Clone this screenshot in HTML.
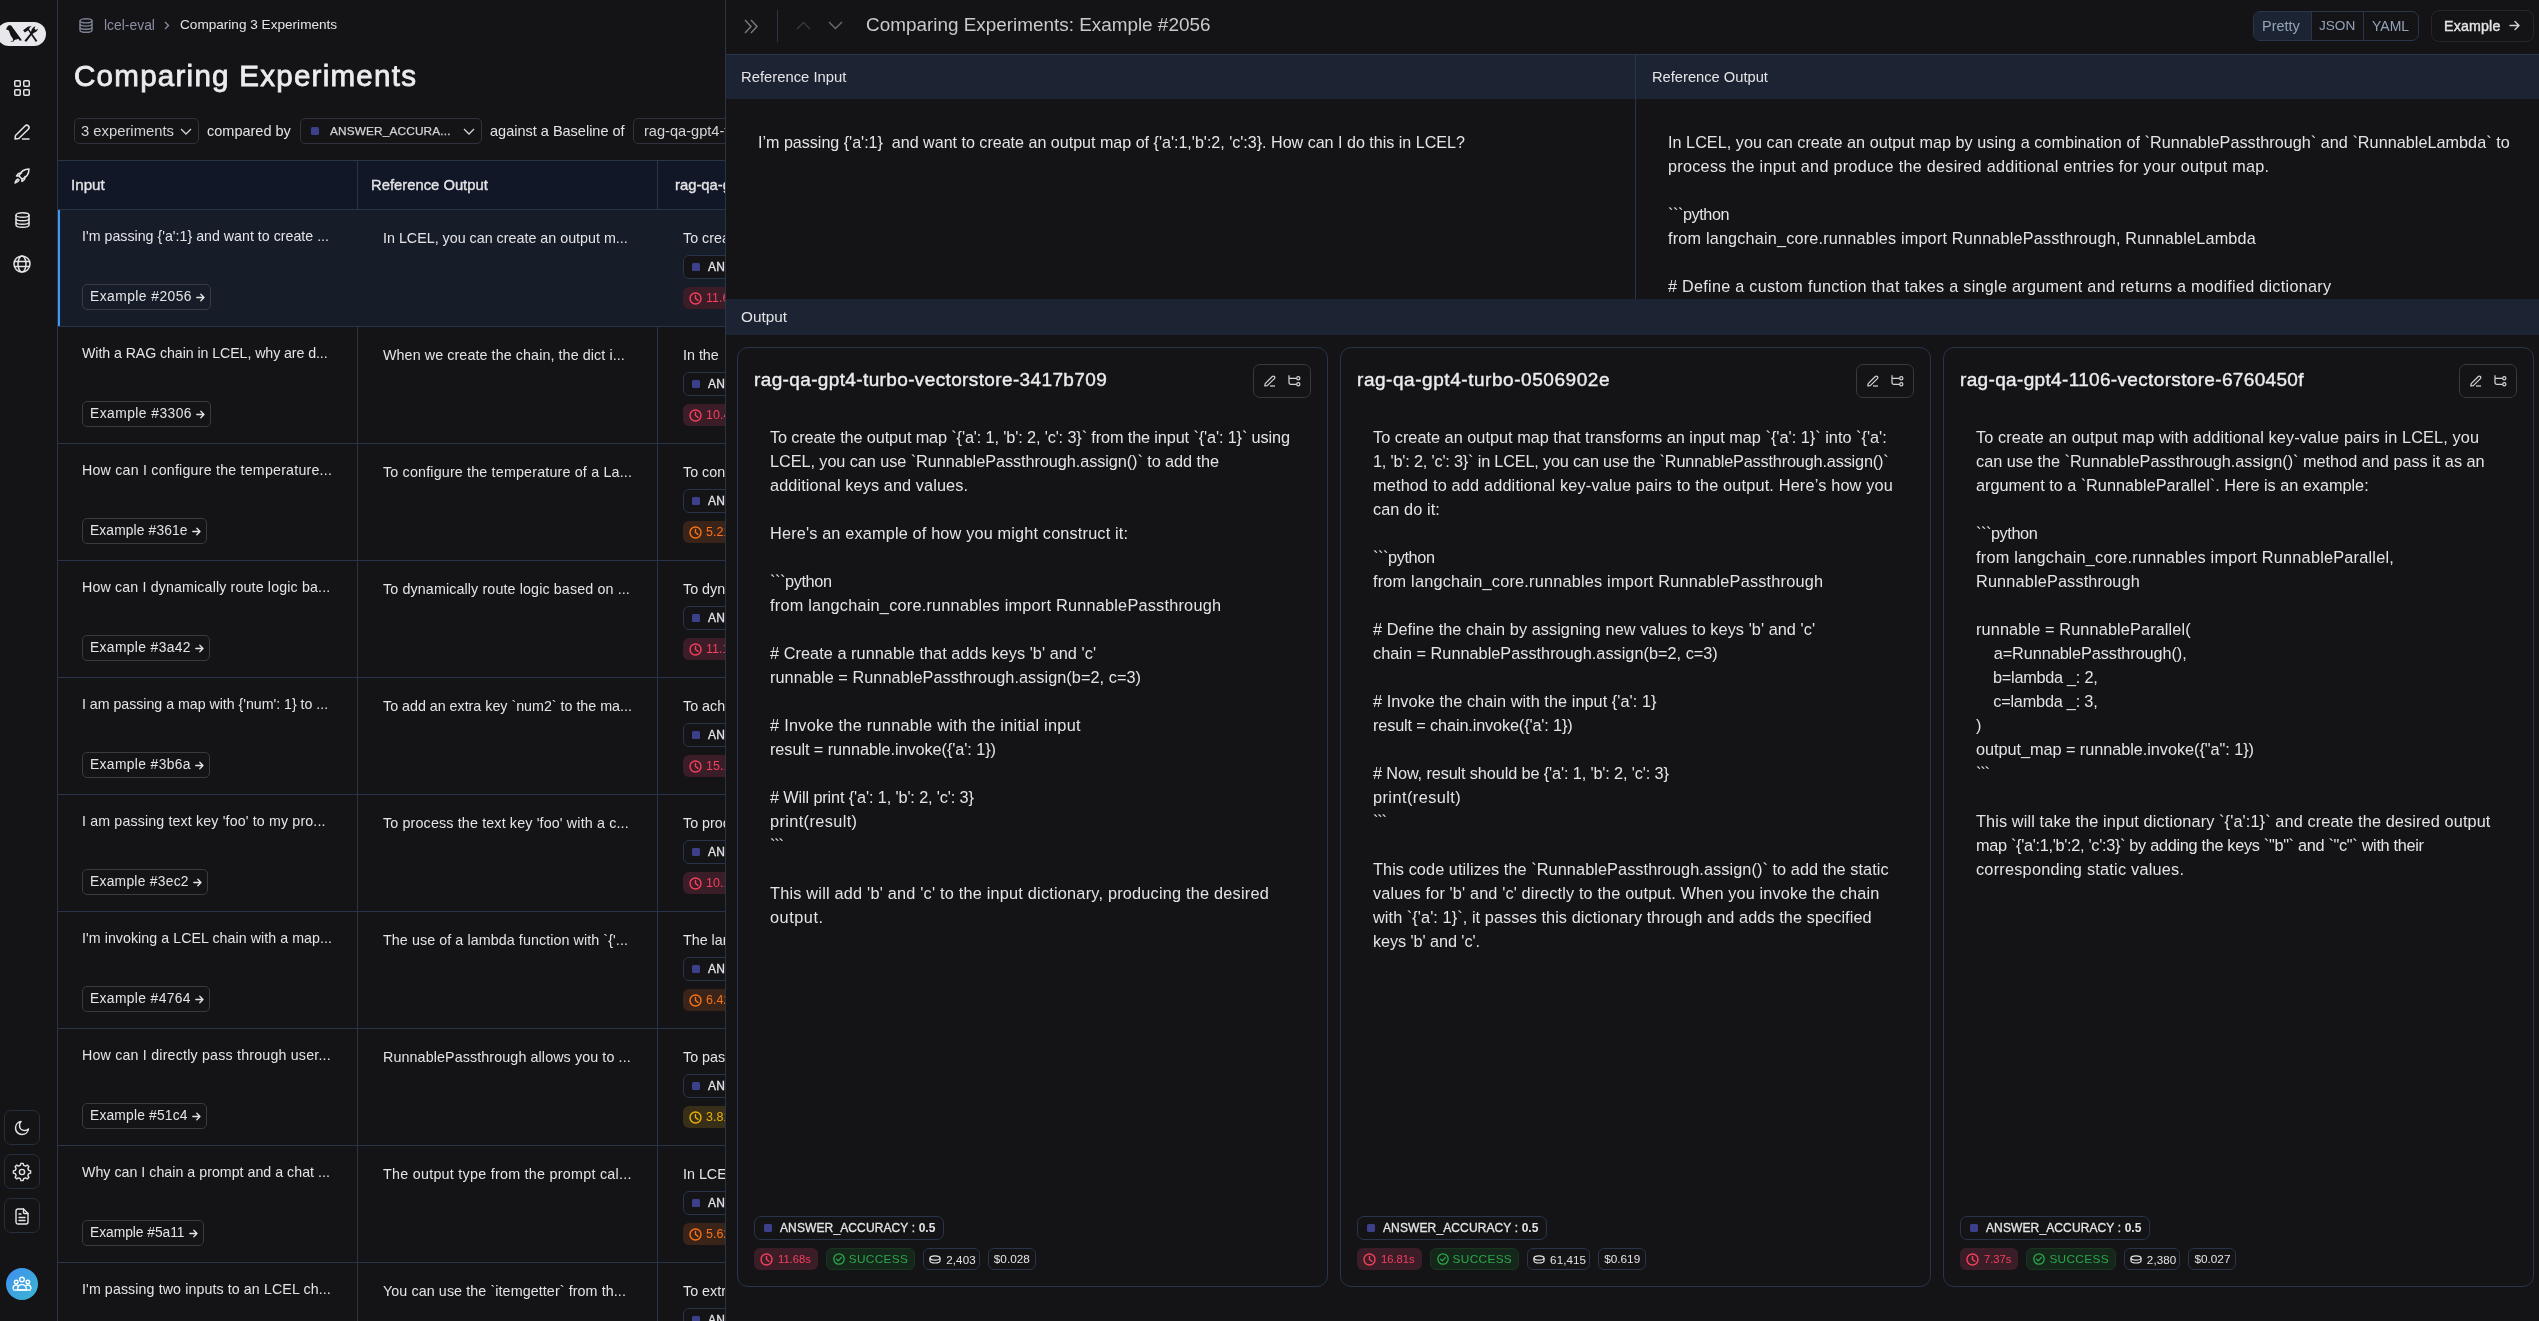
<!DOCTYPE html><html><head><meta charset='utf-8'><style>
*{box-sizing:border-box;margin:0;padding:0}
html{-webkit-font-smoothing:antialiased}
html,body{width:2539px;height:1321px;overflow:hidden;background:#141417;font-family:"Liberation Sans",sans-serif;color:#e4e4e7}
.a{position:absolute;will-change:transform}
.t{position:absolute;white-space:pre;line-height:20px;will-change:transform}
svg{position:absolute;overflow:visible}
</style></head><body><div class="a" style="left:57px;top:0px;width:1px;height:1321px;background:#283548"></div>
<div class="a" style="left:-3px;top:22px;width:49px;height:24px;border-radius:12px;background:#e8e8ec"></div>
<svg style="left:0;top:0" width="50" height="52" viewBox="0 0 50 52">
<path d="M6.2 29.7 C6.8 27 8 25.4 9.6 25.3 C10.6 25.2 11.4 25.8 11.9 26.5 L21.9 40.2 L19.8 40.8 L18.4 38.8 C17.5 39.3 16.6 39.5 15.7 39.4 L14.2 40.3 L13.9 41.3 L11.5 41.8 L10.1 41.6 L12.9 40.8 L13.1 38.9 C12 37.7 11.2 36.5 10.7 35.5 C10 33.8 9.4 31.8 9.0 30.7 C8.3 29.9 7.3 29.6 6.2 29.7 Z" fill="#141417"/>
<path d="M23.1 30.2 L28.2 26.4 L31.8 26.2 L29.6 27.8 L28.9 29.7 L24.9 32.5 Z" fill="#141417"/>
<path d="M27.9 29.9 L28.9 29.0 L37.3 40.7 L35.8 41.9 Z" fill="#141417"/>
<path d="M24.5 40.5 L30.6 33.2 L31.9 34.4 L26.1 41.9 Z" fill="#141417"/>
<path d="M30.6 33.2 C31.4 31 31.6 28.6 33.5 27.3 L35.4 26.2 L34.5 28.7 L35.9 30.1 L38 28.5 C37.6 30.6 36.3 32.1 34.1 32.7 L31.9 34.4 Z" fill="#141417"/>
</svg>
<svg style="left:14px;top:80px" width="16" height="16" viewBox="0 0 16 16" fill="none" stroke="#e4e4e7" stroke-width="1.5">
<rect x="0.75" y="0.75" width="5.5" height="5.5" rx="1"/><rect x="9.75" y="0.75" width="5.5" height="5.5" rx="1"/>
<rect x="0.75" y="9.75" width="5.5" height="5.5" rx="1"/><rect x="9.75" y="9.75" width="5.5" height="5.5" rx="1"/></svg>
<svg style="left:14px;top:124px" width="16" height="16" viewBox="0 0 16 16" fill="none" stroke="#e4e4e7" stroke-width="1.5" stroke-linecap="round" stroke-linejoin="round">
<path d="M1 15 L1.5 11.5 L11 2 C12 1 13.5 1 14.5 2 C15.3 3 15.2 4.3 14.3 5.2 L4.8 14.5 Z"/><path d="M8.5 15 L15 15"/></svg>
<svg style="left:14px;top:168px" width="16" height="16" viewBox="0 0 16 16" fill="none" stroke="#e4e4e7" stroke-width="1.5" stroke-linejoin="round" stroke-linecap="round">
<path d="M15 1 C10 1 6.5 4 5 8 L8 11 C12 9.5 15 6 15 1 Z"/><path d="M5 8 L2.5 8 L4.5 5.5 L7.5 5"/><path d="M8 11 L8 13.5 L10.5 11.5 L11 8.5"/><path d="M4 11 C2.5 11.5 1.5 13 1 15 C3 14.5 4.5 13.5 5 12"/></svg>
<svg style="left:15px;top:212px" width="15" height="16" viewBox="0 0 15 16" fill="none" stroke="#e4e4e7" stroke-width="1.5">
<ellipse cx="7.5" cy="3" rx="6.5" ry="2.3"/><path d="M1 3 V13 C1 14.3 4 15.3 7.5 15.3 C11 15.3 14 14.3 14 13 V3"/><path d="M1 6.5 C1 7.8 4 8.8 7.5 8.8 C11 8.8 14 7.8 14 6.5"/><path d="M1 10 C1 11.3 4 12.3 7.5 12.3 C11 12.3 14 11.3 14 10"/></svg>
<svg style="left:13px;top:255px" width="18" height="18" viewBox="0 0 18 18" fill="none" stroke="#e4e4e7" stroke-width="1.5">
<circle cx="9" cy="9" r="8"/><ellipse cx="9" cy="9" rx="4" ry="8"/><path d="M1.2 6.5 H16.8 M1.2 11.5 H16.8"/></svg>
<div class="a" style="left:4px;top:1110px;width:36px;height:35px;border:1px solid #242e3e;border-radius:7px"></div>
<div class="a" style="left:4px;top:1154px;width:36px;height:35px;border:1px solid #242e3e;border-radius:7px"></div>
<div class="a" style="left:4px;top:1198px;width:36px;height:35px;border:1px solid #242e3e;border-radius:7px"></div>
<svg style="left:14px;top:1120px" width="16" height="16" viewBox="0 0 16 16" fill="none" stroke="#e4e4e7" stroke-width="1.5" stroke-linejoin="round">
<path d="M7 1.5 C4 2 1.5 4.7 1.5 8 C1.5 11.6 4.4 14.5 8 14.5 C11.3 14.5 14 12 14.5 9 C13.5 10 12 10.5 10.5 10.5 C7.5 10.5 5.5 8.3 5.5 5.5 C5.5 4 6 2.5 7 1.5 Z"/></svg>
<svg style="left:12px;top:1162px" width="20" height="20" viewBox="0 0 20 20" fill="none" stroke="#e4e4e7" stroke-width="1.4" stroke-linejoin="round">
<path d="M16.70 8.36 L18.63 8.87 L18.63 11.13 L16.70 11.64 L15.90 13.58 L16.90 15.30 L15.30 16.90 L13.58 15.90 L11.64 16.70 L11.13 18.63 L8.87 18.63 L8.36 16.70 L6.42 15.90 L4.70 16.90 L3.10 15.30 L4.10 13.58 L3.30 11.64 L1.37 11.13 L1.37 8.87 L3.30 8.36 L4.10 6.42 L3.10 4.70 L4.70 3.10 L6.42 4.10 L8.36 3.30 L8.87 1.37 L11.13 1.37 L11.64 3.30 L13.58 4.10 L15.30 3.10 L16.90 4.70 L15.90 6.42 Z"/><circle cx="10" cy="10" r="2.6"/></svg>
<svg style="left:15px;top:1208px" width="14" height="17" viewBox="0 0 14 17" fill="none" stroke="#e4e4e7" stroke-width="1.4" stroke-linejoin="round" stroke-linecap="round">
<path d="M3 1 H8.5 L13 5.5 V14 C13 15.2 12.2 16 11 16 H3 C1.8 16 1 15.2 1 14 V3 C1 1.8 1.8 1 3 1 Z"/><path d="M8.5 1 V4.5 C8.5 5.1 8.9 5.5 9.5 5.5 H13"/><path d="M4 6 H6 M4 9.5 H10 M4 12.5 H10"/></svg>
<div class="a" style="left:6px;top:1268px;width:32px;height:32px;border-radius:50%;background:linear-gradient(135deg,#3f8ef0,#3ab8d2)"></div>
<svg style="left:12px;top:1276px" width="20" height="16" viewBox="0 0 20 16" fill="none" stroke="#ffffff" stroke-width="1.4">
<circle cx="10" cy="3.5" r="2.3"/><circle cx="4.2" cy="6" r="1.8"/><circle cx="15.8" cy="6" r="1.8"/>
<path d="M5.5 14 C5.5 10.5 7.5 8.5 10 8.5 C12.5 8.5 14.5 10.5 14.5 14 Z"/><path d="M1 13 C1 10.5 2.3 9 4.2 9 C5 9 5.7 9.3 6.2 9.7"/><path d="M19 13 C19 10.5 17.7 9 15.8 9 C15 9 14.3 9.3 13.8 9.7"/><path d="M1 14 H19"/></svg>
<svg style="left:79px;top:18px" width="14" height="15" viewBox="0 0 14 15" fill="none" stroke="#7c8294" stroke-width="1.4">
<ellipse cx="7" cy="2.8" rx="6" ry="2.1"/><path d="M1 2.8 V12.2 C1 13.4 3.7 14.3 7 14.3 C10.3 14.3 13 13.4 13 12.2 V2.8"/><path d="M1 6 C1 7.2 3.7 8.1 7 8.1 C10.3 8.1 13 7.2 13 6"/><path d="M1 9.2 C1 10.4 3.7 11.3 7 11.3 C10.3 11.3 13 10.4 13 9.2"/></svg>
<div class="t" style="left:104px;top:5.45px;font-size:13.9px;line-height:40px;color:#8b8fa3">lcel-eval</div>
<svg style="left:164px;top:21px" width="6" height="9" viewBox="0 0 6 9" fill="none" stroke="#8b8fa3" stroke-width="1.3"><path d="M1 1 L4.5 4.5 L1 8"/></svg>
<div class="t" style="left:180px;top:5.44px;font-size:13.6px;line-height:40px;color:#e4e4e7">Comparing 3 Experiments</div>
<div class="t" style="left:74px;top:56.03px;font-size:29.6px;line-height:40px;color:#ececee;-webkit-text-stroke:0.8px #ececee;letter-spacing:1.227px">Comparing Experiments</div>
<div class="a" style="left:74px;top:118px;width:125px;height:26px;border:1px solid #2e323c;border-radius:5px"></div>
<div class="t" style="left:81px;top:111.27px;font-size:14.8px;line-height:40px;color:#d4d4d8">3 experiments</div>
<svg style="left:180px;top:128px" width="12" height="7" viewBox="0 0 12 7" fill="none" stroke="#d4d4d8" stroke-width="1.3"><path d="M1 1 L6 6 L11 1"/></svg>
<div class="t" style="left:207px;top:111.26px;font-size:14.5px;line-height:40px;color:#e4e4e7">compared by</div>
<div class="a" style="left:300px;top:118px;width:182px;height:26px;border:1px solid #2e323c;border-radius:5px"></div>
<div class="a" style="left:311px;top:127px;width:8px;height:8px;background:#3c3f8a;border-radius:1.5px"></div>
<div class="t" style="left:330px;top:111.21px;font-size:11.8px;line-height:40px;color:#d4d4d8;-webkit-text-stroke:0.25px #d4d4d8;letter-spacing:0.167px">ANSWER_ACCURA...</div>
<svg style="left:463px;top:128px" width="12" height="7" viewBox="0 0 12 7" fill="none" stroke="#d4d4d8" stroke-width="1.3"><path d="M1 1 L6 6 L11 1"/></svg>
<div class="t" style="left:490px;top:111.26px;font-size:14.5px;line-height:40px;color:#e4e4e7">against a Baseline of</div>
<div class="a" style="left:633px;top:118px;width:140px;height:26px;border:1px solid #2e323c;border-radius:5px"></div>
<div class="t" style="left:644px;top:111.26px;font-size:14.6px;line-height:40px;color:#d4d4d8">rag-qa-gpt4-turbo-vectorstore</div>
<div class="a" style="left:58px;top:160px;width:667px;height:50px;background:#111726;border-top:1px solid #283548;border-bottom:1px solid #283548"></div>
<div class="t" style="left:71px;top:165.07px;font-size:15.2px;line-height:40px;color:#e4e4e7;-webkit-text-stroke:0.35px #e4e4e7">Input</div>
<div class="t" style="left:371px;top:165.07px;font-size:14.8px;line-height:40px;color:#e4e4e7;-webkit-text-stroke:0.35px #e4e4e7">Reference Output</div>
<div class="t" style="left:675px;top:165.07px;font-size:14.8px;line-height:40px;color:#e4e4e7;-webkit-text-stroke:0.35px #e4e4e7">rag-qa-gpt4-turbo</div>
<div class="a" style="left:357px;top:160px;width:1px;height:1161px;background:#283548"></div>
<div class="a" style="left:657px;top:160px;width:1px;height:1161px;background:#283548"></div>
<div class="a" style="left:58px;top:210px;width:667px;height:116px;background:#171c29"></div>
<div class="a" style="left:58px;top:210px;width:2px;height:116px;background:#3f97f6"></div>
<div class="a" style="left:58px;top:326px;width:667px;height:1px;background:#283548"></div>
<div class="t" style="left:82px;top:215.96px;font-size:14.2px;line-height:40px;color:#e4e4e7;letter-spacing:0.017px">I'm passing {'a':1} and want to create ...</div>
<div class="t" style="left:383px;top:217.76px;font-size:14.3px;line-height:40px;color:#e4e4e7;letter-spacing:-0.002px">In LCEL, you can create an output m...</div>
<div class="t" style="left:683px;top:217.86px;font-size:14.3px;line-height:40px;color:#e4e4e7">To create</div>
<div class="a" style="left:82px;top:284px;width:129px;height:26px;border:1px solid #3a3a42;border-radius:5px"></div>
<div class="t" style="left:89.5px;top:277.25px;font-size:13.8px;line-height:40px;color:#e4e4e7;letter-spacing:0.467px">Example #2056</div>
<svg style="left:196px;top:293px" width="9" height="9" viewBox="0 0 9 9" fill="none" stroke="#e4e4e7" stroke-width="1.3" stroke-linecap="round" stroke-linejoin="round"><path d="M0.8 4.5 H8 M4.8 1.2 L8 4.5 L4.8 7.8"/></svg>
<div class="a" style="left:683px;top:255px;width:120px;height:24px;border:1px solid #27344a;border-radius:6px;background:#141417"></div>
<div class="a" style="left:692px;top:263px;width:8px;height:8px;background:#3c3f8a;border-radius:1.5px"></div>
<div class="t" style="left:708px;top:247.22px;font-size:12px;line-height:40px;color:#e4e4e7;-webkit-text-stroke:0.3px #e4e4e7;letter-spacing:0.25px">ANSWER</div>
<div class="a" style="left:683px;top:287px;width:80px;height:22px;background:#3a1d26;border-radius:6px"></div>
<svg style="left:688.5px;top:291.5px" width="13.0" height="13.0" viewBox="0 0 13.0 13.0" fill="none" stroke="#f43f5e" stroke-width="1.4" stroke-linecap="round"><circle cx="6.5" cy="6.5" r="5.5"/><path d="M6.5 3.4749999999999996 V6.5 L8.975 8.425"/></svg>
<div class="t" style="left:706px;top:278.23px;font-size:12.5px;line-height:40px;color:#f43f5e">11.68s</div>
<div class="a" style="left:58px;top:443px;width:667px;height:1px;background:#283548"></div>
<div class="t" style="left:82px;top:332.96px;font-size:14.2px;line-height:40px;color:#e4e4e7;letter-spacing:-0.073px">With a RAG chain in LCEL, why are d...</div>
<div class="t" style="left:383px;top:334.76px;font-size:14.3px;line-height:40px;color:#e4e4e7;letter-spacing:0.089px">When we create the chain, the dict i...</div>
<div class="t" style="left:683px;top:334.86px;font-size:14.3px;line-height:40px;color:#e4e4e7">In the</div>
<div class="a" style="left:82px;top:401px;width:129px;height:26px;border:1px solid #3a3a42;border-radius:5px"></div>
<div class="t" style="left:89.5px;top:394.25px;font-size:13.8px;line-height:40px;color:#e4e4e7;letter-spacing:0.467px">Example #3306</div>
<svg style="left:196px;top:410px" width="9" height="9" viewBox="0 0 9 9" fill="none" stroke="#e4e4e7" stroke-width="1.3" stroke-linecap="round" stroke-linejoin="round"><path d="M0.8 4.5 H8 M4.8 1.2 L8 4.5 L4.8 7.8"/></svg>
<div class="a" style="left:683px;top:372px;width:120px;height:24px;border:1px solid #27344a;border-radius:6px;background:#141417"></div>
<div class="a" style="left:692px;top:380px;width:8px;height:8px;background:#3c3f8a;border-radius:1.5px"></div>
<div class="t" style="left:708px;top:364.22px;font-size:12px;line-height:40px;color:#e4e4e7;-webkit-text-stroke:0.3px #e4e4e7;letter-spacing:0.25px">ANSWER</div>
<div class="a" style="left:683px;top:404px;width:80px;height:22px;background:#3a1d26;border-radius:6px"></div>
<svg style="left:688.5px;top:408.5px" width="13.0" height="13.0" viewBox="0 0 13.0 13.0" fill="none" stroke="#f43f5e" stroke-width="1.4" stroke-linecap="round"><circle cx="6.5" cy="6.5" r="5.5"/><path d="M6.5 3.4749999999999996 V6.5 L8.975 8.425"/></svg>
<div class="t" style="left:706px;top:395.23px;font-size:12.5px;line-height:40px;color:#f43f5e">10.42s</div>
<div class="a" style="left:58px;top:560px;width:667px;height:1px;background:#283548"></div>
<div class="t" style="left:82px;top:449.96px;font-size:14.2px;line-height:40px;color:#e4e4e7;letter-spacing:0.232px">How can I configure the temperature...</div>
<div class="t" style="left:383px;top:451.76px;font-size:14.3px;line-height:40px;color:#e4e4e7;letter-spacing:0.171px">To configure the temperature of a La...</div>
<div class="t" style="left:683px;top:451.86px;font-size:14.3px;line-height:40px;color:#e4e4e7">To config</div>
<div class="a" style="left:82px;top:518px;width:125px;height:26px;border:1px solid #3a3a42;border-radius:5px"></div>
<div class="t" style="left:89.5px;top:511.25px;font-size:13.8px;line-height:40px;color:#e4e4e7;letter-spacing:0.134px">Example #361e</div>
<svg style="left:192px;top:527px" width="9" height="9" viewBox="0 0 9 9" fill="none" stroke="#e4e4e7" stroke-width="1.3" stroke-linecap="round" stroke-linejoin="round"><path d="M0.8 4.5 H8 M4.8 1.2 L8 4.5 L4.8 7.8"/></svg>
<div class="a" style="left:683px;top:489px;width:120px;height:24px;border:1px solid #27344a;border-radius:6px;background:#141417"></div>
<div class="a" style="left:692px;top:497px;width:8px;height:8px;background:#3c3f8a;border-radius:1.5px"></div>
<div class="t" style="left:708px;top:481.22px;font-size:12px;line-height:40px;color:#e4e4e7;-webkit-text-stroke:0.3px #e4e4e7;letter-spacing:0.25px">ANSWER</div>
<div class="a" style="left:683px;top:521px;width:80px;height:22px;background:#3a2419;border-radius:6px"></div>
<svg style="left:688.5px;top:525.5px" width="13.0" height="13.0" viewBox="0 0 13.0 13.0" fill="none" stroke="#f97316" stroke-width="1.4" stroke-linecap="round"><circle cx="6.5" cy="6.5" r="5.5"/><path d="M6.5 3.4749999999999996 V6.5 L8.975 8.425"/></svg>
<div class="t" style="left:706px;top:512.23px;font-size:12.5px;line-height:40px;color:#f97316">5.21s</div>
<div class="a" style="left:58px;top:677px;width:667px;height:1px;background:#283548"></div>
<div class="t" style="left:82px;top:566.96px;font-size:14.2px;line-height:40px;color:#e4e4e7;letter-spacing:0.161px">How can I dynamically route logic ba...</div>
<div class="t" style="left:383px;top:568.76px;font-size:14.3px;line-height:40px;color:#e4e4e7;letter-spacing:0.116px">To dynamically route logic based on ...</div>
<div class="t" style="left:683px;top:568.86px;font-size:14.3px;line-height:40px;color:#e4e4e7">To dyna</div>
<div class="a" style="left:82px;top:635px;width:128px;height:26px;border:1px solid #3a3a42;border-radius:5px"></div>
<div class="t" style="left:89.5px;top:628.25px;font-size:13.8px;line-height:40px;color:#e4e4e7;letter-spacing:0.384px">Example #3a42</div>
<svg style="left:195px;top:644px" width="9" height="9" viewBox="0 0 9 9" fill="none" stroke="#e4e4e7" stroke-width="1.3" stroke-linecap="round" stroke-linejoin="round"><path d="M0.8 4.5 H8 M4.8 1.2 L8 4.5 L4.8 7.8"/></svg>
<div class="a" style="left:683px;top:606px;width:120px;height:24px;border:1px solid #27344a;border-radius:6px;background:#141417"></div>
<div class="a" style="left:692px;top:614px;width:8px;height:8px;background:#3c3f8a;border-radius:1.5px"></div>
<div class="t" style="left:708px;top:598.22px;font-size:12px;line-height:40px;color:#e4e4e7;-webkit-text-stroke:0.3px #e4e4e7;letter-spacing:0.25px">ANSWER</div>
<div class="a" style="left:683px;top:638px;width:80px;height:22px;background:#3a1d26;border-radius:6px"></div>
<svg style="left:688.5px;top:642.5px" width="13.0" height="13.0" viewBox="0 0 13.0 13.0" fill="none" stroke="#f43f5e" stroke-width="1.4" stroke-linecap="round"><circle cx="6.5" cy="6.5" r="5.5"/><path d="M6.5 3.4749999999999996 V6.5 L8.975 8.425"/></svg>
<div class="t" style="left:706px;top:629.23px;font-size:12.5px;line-height:40px;color:#f43f5e">11.18s</div>
<div class="a" style="left:58px;top:794px;width:667px;height:1px;background:#283548"></div>
<div class="t" style="left:82px;top:683.96px;font-size:14.2px;line-height:40px;color:#e4e4e7;letter-spacing:-0.016px">I am passing a map with {'num': 1} to ...</div>
<div class="t" style="left:383px;top:685.76px;font-size:14.3px;line-height:40px;color:#e4e4e7;letter-spacing:-0.017px">To add an extra key `num2` to the ma...</div>
<div class="t" style="left:683px;top:685.86px;font-size:14.3px;line-height:40px;color:#e4e4e7">To achi</div>
<div class="a" style="left:82px;top:752px;width:128px;height:26px;border:1px solid #3a3a42;border-radius:5px"></div>
<div class="t" style="left:89.5px;top:745.25px;font-size:13.8px;line-height:40px;color:#e4e4e7;letter-spacing:0.384px">Example #3b6a</div>
<svg style="left:195px;top:761px" width="9" height="9" viewBox="0 0 9 9" fill="none" stroke="#e4e4e7" stroke-width="1.3" stroke-linecap="round" stroke-linejoin="round"><path d="M0.8 4.5 H8 M4.8 1.2 L8 4.5 L4.8 7.8"/></svg>
<div class="a" style="left:683px;top:723px;width:120px;height:24px;border:1px solid #27344a;border-radius:6px;background:#141417"></div>
<div class="a" style="left:692px;top:731px;width:8px;height:8px;background:#3c3f8a;border-radius:1.5px"></div>
<div class="t" style="left:708px;top:715.22px;font-size:12px;line-height:40px;color:#e4e4e7;-webkit-text-stroke:0.3px #e4e4e7;letter-spacing:0.25px">ANSWER</div>
<div class="a" style="left:683px;top:755px;width:80px;height:22px;background:#3a1d26;border-radius:6px"></div>
<svg style="left:688.5px;top:759.5px" width="13.0" height="13.0" viewBox="0 0 13.0 13.0" fill="none" stroke="#f43f5e" stroke-width="1.4" stroke-linecap="round"><circle cx="6.5" cy="6.5" r="5.5"/><path d="M6.5 3.4749999999999996 V6.5 L8.975 8.425"/></svg>
<div class="t" style="left:706px;top:746.23px;font-size:12.5px;line-height:40px;color:#f43f5e">15.11s</div>
<div class="a" style="left:58px;top:911px;width:667px;height:1px;background:#283548"></div>
<div class="t" style="left:82px;top:800.96px;font-size:14.2px;line-height:40px;color:#e4e4e7;letter-spacing:0.160px">I am passing text key 'foo' to my pro...</div>
<div class="t" style="left:383px;top:802.76px;font-size:14.3px;line-height:40px;color:#e4e4e7;letter-spacing:0.145px">To process the text key 'foo' with a c...</div>
<div class="t" style="left:683px;top:802.86px;font-size:14.3px;line-height:40px;color:#e4e4e7">To proc</div>
<div class="a" style="left:82px;top:869px;width:126px;height:26px;border:1px solid #3a3a42;border-radius:5px"></div>
<div class="t" style="left:89.5px;top:862.25px;font-size:13.8px;line-height:40px;color:#e4e4e7;letter-spacing:0.283px">Example #3ec2</div>
<svg style="left:193px;top:878px" width="9" height="9" viewBox="0 0 9 9" fill="none" stroke="#e4e4e7" stroke-width="1.3" stroke-linecap="round" stroke-linejoin="round"><path d="M0.8 4.5 H8 M4.8 1.2 L8 4.5 L4.8 7.8"/></svg>
<div class="a" style="left:683px;top:840px;width:120px;height:24px;border:1px solid #27344a;border-radius:6px;background:#141417"></div>
<div class="a" style="left:692px;top:848px;width:8px;height:8px;background:#3c3f8a;border-radius:1.5px"></div>
<div class="t" style="left:708px;top:832.22px;font-size:12px;line-height:40px;color:#e4e4e7;-webkit-text-stroke:0.3px #e4e4e7;letter-spacing:0.25px">ANSWER</div>
<div class="a" style="left:683px;top:872px;width:80px;height:22px;background:#3a1d26;border-radius:6px"></div>
<svg style="left:688.5px;top:876.5px" width="13.0" height="13.0" viewBox="0 0 13.0 13.0" fill="none" stroke="#f43f5e" stroke-width="1.4" stroke-linecap="round"><circle cx="6.5" cy="6.5" r="5.5"/><path d="M6.5 3.4749999999999996 V6.5 L8.975 8.425"/></svg>
<div class="t" style="left:706px;top:863.23px;font-size:12.5px;line-height:40px;color:#f43f5e">10.11s</div>
<div class="a" style="left:58px;top:1028px;width:667px;height:1px;background:#283548"></div>
<div class="t" style="left:82px;top:917.96px;font-size:14.2px;line-height:40px;color:#e4e4e7;letter-spacing:0.065px">I'm invoking a LCEL chain with a map...</div>
<div class="t" style="left:383px;top:919.76px;font-size:14.3px;line-height:40px;color:#e4e4e7;letter-spacing:0.076px">The use of a lambda function with `{'...</div>
<div class="t" style="left:683px;top:919.86px;font-size:14.3px;line-height:40px;color:#e4e4e7">The lam</div>
<div class="a" style="left:82px;top:986px;width:128px;height:26px;border:1px solid #3a3a42;border-radius:5px"></div>
<div class="t" style="left:89.5px;top:979.25px;font-size:13.8px;line-height:40px;color:#e4e4e7;letter-spacing:0.384px">Example #4764</div>
<svg style="left:195px;top:995px" width="9" height="9" viewBox="0 0 9 9" fill="none" stroke="#e4e4e7" stroke-width="1.3" stroke-linecap="round" stroke-linejoin="round"><path d="M0.8 4.5 H8 M4.8 1.2 L8 4.5 L4.8 7.8"/></svg>
<div class="a" style="left:683px;top:957px;width:120px;height:24px;border:1px solid #27344a;border-radius:6px;background:#141417"></div>
<div class="a" style="left:692px;top:965px;width:8px;height:8px;background:#3c3f8a;border-radius:1.5px"></div>
<div class="t" style="left:708px;top:949.22px;font-size:12px;line-height:40px;color:#e4e4e7;-webkit-text-stroke:0.3px #e4e4e7;letter-spacing:0.25px">ANSWER</div>
<div class="a" style="left:683px;top:989px;width:80px;height:22px;background:#3a2419;border-radius:6px"></div>
<svg style="left:688.5px;top:993.5px" width="13.0" height="13.0" viewBox="0 0 13.0 13.0" fill="none" stroke="#f97316" stroke-width="1.4" stroke-linecap="round"><circle cx="6.5" cy="6.5" r="5.5"/><path d="M6.5 3.4749999999999996 V6.5 L8.975 8.425"/></svg>
<div class="t" style="left:706px;top:980.23px;font-size:12.5px;line-height:40px;color:#f97316">6.42s</div>
<div class="a" style="left:58px;top:1145px;width:667px;height:1px;background:#283548"></div>
<div class="t" style="left:82px;top:1034.96px;font-size:14.2px;line-height:40px;color:#e4e4e7;letter-spacing:0.215px">How can I directly pass through user...</div>
<div class="t" style="left:383px;top:1036.76px;font-size:14.3px;line-height:40px;color:#e4e4e7;letter-spacing:0.103px">RunnablePassthrough allows you to ...</div>
<div class="t" style="left:683px;top:1036.86px;font-size:14.3px;line-height:40px;color:#e4e4e7">To pass</div>
<div class="a" style="left:82px;top:1103px;width:125px;height:26px;border:1px solid #3a3a42;border-radius:5px"></div>
<div class="t" style="left:89.5px;top:1096.25px;font-size:13.8px;line-height:40px;color:#e4e4e7;letter-spacing:0.199px">Example #51c4</div>
<svg style="left:192px;top:1112px" width="9" height="9" viewBox="0 0 9 9" fill="none" stroke="#e4e4e7" stroke-width="1.3" stroke-linecap="round" stroke-linejoin="round"><path d="M0.8 4.5 H8 M4.8 1.2 L8 4.5 L4.8 7.8"/></svg>
<div class="a" style="left:683px;top:1074px;width:120px;height:24px;border:1px solid #27344a;border-radius:6px;background:#141417"></div>
<div class="a" style="left:692px;top:1082px;width:8px;height:8px;background:#3c3f8a;border-radius:1.5px"></div>
<div class="t" style="left:708px;top:1066.22px;font-size:12px;line-height:40px;color:#e4e4e7;-webkit-text-stroke:0.3px #e4e4e7;letter-spacing:0.25px">ANSWER</div>
<div class="a" style="left:683px;top:1106px;width:80px;height:22px;background:#372f17;border-radius:6px"></div>
<svg style="left:688.5px;top:1110.5px" width="13.0" height="13.0" viewBox="0 0 13.0 13.0" fill="none" stroke="#eab308" stroke-width="1.4" stroke-linecap="round"><circle cx="6.5" cy="6.5" r="5.5"/><path d="M6.5 3.4749999999999996 V6.5 L8.975 8.425"/></svg>
<div class="t" style="left:706px;top:1097.22px;font-size:12.5px;line-height:40px;color:#eab308">3.81s</div>
<div class="a" style="left:58px;top:1262px;width:667px;height:1px;background:#283548"></div>
<div class="t" style="left:82px;top:1151.96px;font-size:14.2px;line-height:40px;color:#e4e4e7;letter-spacing:0.028px">Why can I chain a prompt and a chat ...</div>
<div class="t" style="left:383px;top:1153.76px;font-size:14.3px;line-height:40px;color:#e4e4e7;letter-spacing:0.273px">The output type from the prompt cal...</div>
<div class="t" style="left:683px;top:1153.86px;font-size:14.3px;line-height:40px;color:#e4e4e7">In LCEL</div>
<div class="a" style="left:82px;top:1220px;width:122px;height:26px;border:1px solid #3a3a42;border-radius:5px"></div>
<div class="t" style="left:89.5px;top:1213.25px;font-size:13.8px;line-height:40px;color:#e4e4e7;letter-spacing:-0.030px">Example #5a11</div>
<svg style="left:189px;top:1229px" width="9" height="9" viewBox="0 0 9 9" fill="none" stroke="#e4e4e7" stroke-width="1.3" stroke-linecap="round" stroke-linejoin="round"><path d="M0.8 4.5 H8 M4.8 1.2 L8 4.5 L4.8 7.8"/></svg>
<div class="a" style="left:683px;top:1191px;width:120px;height:24px;border:1px solid #27344a;border-radius:6px;background:#141417"></div>
<div class="a" style="left:692px;top:1199px;width:8px;height:8px;background:#3c3f8a;border-radius:1.5px"></div>
<div class="t" style="left:708px;top:1183.22px;font-size:12px;line-height:40px;color:#e4e4e7;-webkit-text-stroke:0.3px #e4e4e7;letter-spacing:0.25px">ANSWER</div>
<div class="a" style="left:683px;top:1223px;width:80px;height:22px;background:#3a2419;border-radius:6px"></div>
<svg style="left:688.5px;top:1227.5px" width="13.0" height="13.0" viewBox="0 0 13.0 13.0" fill="none" stroke="#f97316" stroke-width="1.4" stroke-linecap="round"><circle cx="6.5" cy="6.5" r="5.5"/><path d="M6.5 3.4749999999999996 V6.5 L8.975 8.425"/></svg>
<div class="t" style="left:706px;top:1214.22px;font-size:12.5px;line-height:40px;color:#f97316">5.62s</div>
<div class="a" style="left:58px;top:1379px;width:667px;height:1px;background:#283548"></div>
<div class="t" style="left:82px;top:1268.96px;font-size:14.2px;line-height:40px;color:#e4e4e7;letter-spacing:0.116px">I'm passing two inputs to an LCEL ch...</div>
<div class="t" style="left:383px;top:1270.76px;font-size:14.3px;line-height:40px;color:#e4e4e7;letter-spacing:0.090px">You can use the `itemgetter` from th...</div>
<div class="t" style="left:683px;top:1270.86px;font-size:14.3px;line-height:40px;color:#e4e4e7">To extra</div>
<div class="a" style="left:82px;top:1337px;width:128px;height:26px;border:1px solid #3a3a42;border-radius:5px"></div>
<div class="t" style="left:89.5px;top:1330.25px;font-size:13.8px;line-height:40px;color:#e4e4e7;letter-spacing:0.384px">Example #5b2d</div>
<svg style="left:195px;top:1346px" width="9" height="9" viewBox="0 0 9 9" fill="none" stroke="#e4e4e7" stroke-width="1.3" stroke-linecap="round" stroke-linejoin="round"><path d="M0.8 4.5 H8 M4.8 1.2 L8 4.5 L4.8 7.8"/></svg>
<div class="a" style="left:683px;top:1308px;width:120px;height:24px;border:1px solid #27344a;border-radius:6px;background:#141417"></div>
<div class="a" style="left:692px;top:1316px;width:8px;height:8px;background:#3c3f8a;border-radius:1.5px"></div>
<div class="t" style="left:708px;top:1300.22px;font-size:12px;line-height:40px;color:#e4e4e7;-webkit-text-stroke:0.3px #e4e4e7;letter-spacing:0.25px">ANSWER</div>
<div class="a" style="left:683px;top:1340px;width:80px;height:22px;background:#3a2419;border-radius:6px"></div>
<svg style="left:688.5px;top:1344.5px" width="13.0" height="13.0" viewBox="0 0 13.0 13.0" fill="none" stroke="#f97316" stroke-width="1.4" stroke-linecap="round"><circle cx="6.5" cy="6.5" r="5.5"/><path d="M6.5 3.4749999999999996 V6.5 L8.975 8.425"/></svg>
<div class="t" style="left:706px;top:1331.22px;font-size:12.5px;line-height:40px;color:#f97316">4.12s</div>
<div class="a" style="left:725px;top:0;width:1814px;height:1321px;background:#141417;border-left:1px solid #283548"></div>
<div class="a" style="left:726px;top:54px;width:1813px;height:1px;background:#283548"></div>
<svg style="left:744px;top:19px" width="15" height="15" viewBox="0 0 15 15" fill="none" stroke="#7a7a80" stroke-width="1.4"><path d="M1 1 L7 7.5 L1 14 M7 1 L13 7.5 L7 14"/></svg>
<div class="a" style="left:777px;top:10px;width:1px;height:32px;background:#283548"></div>
<svg style="left:796px;top:21px" width="15" height="9" viewBox="0 0 15 9" fill="none" stroke="#3a3a3e" stroke-width="1.4"><path d="M1 8 L7.5 1.5 L14 8"/></svg>
<svg style="left:828px;top:21px" width="15" height="9" viewBox="0 0 15 9" fill="none" stroke="#6b6b70" stroke-width="1.4"><path d="M1 1 L7.5 7.5 L14 1"/></svg>
<div class="t" style="left:866px;top:5.14px;font-size:18.9px;line-height:40px;color:#c9c9cd">Comparing Experiments: Example #2056</div>
<div class="a" style="left:2253px;top:11px;width:166px;height:30px;border:1px solid #28354a;border-radius:7px;overflow:hidden"></div>
<div class="a" style="left:2254px;top:12px;width:57px;height:28px;background:#1c2434;border-radius:6px 0 0 6px"></div>
<div class="a" style="left:2311px;top:12px;width:1px;height:28px;background:#28354a"></div>
<div class="a" style="left:2363px;top:12px;width:1px;height:28px;background:#28354a"></div>
<div class="t" style="left:2262px;top:6.06px;font-size:14.5px;line-height:40px;color:#94a3b8">Pretty</div>
<div class="t" style="left:2319px;top:6.04px;font-size:13.6px;line-height:40px;color:#94a3b8">JSON</div>
<div class="t" style="left:2372px;top:6.05px;font-size:14px;line-height:40px;color:#94a3b8">YAML</div>
<div class="a" style="left:2431px;top:10px;width:103px;height:32px;border:1px solid #26272d;border-radius:8px"></div>
<div class="t" style="left:2444px;top:6.06px;font-size:14.2px;line-height:40px;color:#e4e4e7;-webkit-text-stroke:0.4px #e4e4e7;letter-spacing:0.183px">Example</div>
<svg style="left:2509px;top:20px" width="11" height="11" viewBox="0 0 11 11" fill="none" stroke="#d4d4d8" stroke-width="1.4" stroke-linecap="round" stroke-linejoin="round"><path d="M1 5.5 H10 M6 1.5 L10 5.5 L6 9.5"/></svg>
<div class="a" style="left:726px;top:55px;width:1813px;height:44px;background:#1c2433"></div>
<div class="a" style="left:1635px;top:55px;width:1px;height:244px;background:#283548"></div>
<div class="t" style="left:741px;top:56.97px;font-size:14.8px;line-height:40px;color:#e4e4e7">Reference Input</div>
<div class="t" style="left:1652px;top:56.96px;font-size:14.7px;line-height:40px;color:#e4e4e7">Reference Output</div>
<div class="t" style="left:757.7px;top:122.49px;font-size:16.1px;line-height:40px;color:#e4e4e7;letter-spacing:-0.012px">I’m passing {'a':1}  and want to create an output map of {'a':1,'b':2, 'c':3}. How can I do this in LCEL?</div>
<div class="a" style="left:1636px;top:99px;width:903px;height:200px;overflow:hidden">
<div class="t" style="left:32px;top:23.49px;font-size:16.2px;line-height:40px;color:#e4e4e7;letter-spacing:0.036px">In LCEL, you can create an output map by using a combination of `RunnablePassthrough` and `RunnableLambda` to</div>
<div class="t" style="left:32px;top:47.49px;font-size:16.2px;line-height:40px;color:#e4e4e7;letter-spacing:0.280px">process the input and produce the desired additional entries for your output map.</div>
<div class="t" style="left:32px;top:95.49px;font-size:16.2px;line-height:40px;color:#e4e4e7;letter-spacing:-0.410px">```python</div>
<div class="t" style="left:32px;top:119.49px;font-size:16.2px;line-height:40px;color:#e4e4e7;letter-spacing:0.205px">from langchain_core.runnables import RunnablePassthrough, RunnableLambda</div>
<div class="t" style="left:32px;top:167.49px;font-size:16.2px;line-height:40px;color:#e4e4e7;letter-spacing:0.274px"># Define a custom function that takes a single argument and returns a modified dictionary</div>
<div class="t" style="left:32px;top:191.49px;font-size:16.2px;line-height:40px;color:#e4e4e7">def add_entries(input_dict):</div>
</div>
<div class="a" style="left:726px;top:299px;width:1813px;height:36px;background:#1c2433"></div>
<div class="t" style="left:741px;top:296.98px;font-size:15.3px;line-height:40px;color:#e4e4e7">Output</div>
<div class="a" style="left:737px;top:347px;width:591px;height:940px;border:1px solid #27344a;border-radius:11px"></div>
<div class="t" style="left:754px;top:360.34px;font-size:19px;line-height:40px;color:#ececee;-webkit-text-stroke:0.4px #ececee;letter-spacing:0.37px">rag-qa-gpt4-turbo-vectorstore-3417b709</div>
<div class="a" style="left:1253px;top:364px;width:58px;height:34px;border:1px solid #38383e;border-radius:7px"></div>
<svg style="left:1264px;top:375px" width="12" height="12" viewBox="0 0 12 12" fill="none" stroke="#d4d4d8" stroke-width="1.2" stroke-linejoin="round"><path d="M0.8 11 L1.2 8.6 L8.3 1.5 C8.9 0.9 9.8 0.9 10.4 1.5 C11 2.1 11 3 10.4 3.6 L3.3 10.6 Z"/><path d="M6 11 H11"/></svg>
<svg style="left:1288px;top:375px" width="13" height="12" viewBox="0 0 13 12" fill="none" stroke="#d4d4d8" stroke-width="1.2"><path d="M1 0.3 V7.5 C1 8.8 1.8 9.3 3 9.3 H8.5 M1 3.3 H8.5"/><circle cx="10.3" cy="3.3" r="1.6"/><circle cx="10.3" cy="9.3" r="1.6"/></svg>
<div class="t" style="left:770px;top:417.29px;font-size:16.3px;line-height:40px;color:#e4e4e7;letter-spacing:-0.132px">To create the output map `{'a': 1, 'b': 2, 'c': 3}` from the input `{'a': 1}` using</div>
<div class="t" style="left:770px;top:441.29px;font-size:16.3px;line-height:40px;color:#e4e4e7;letter-spacing:-0.077px">LCEL, you can use `RunnablePassthrough.assign()` to add the</div>
<div class="t" style="left:770px;top:465.29px;font-size:16.3px;line-height:40px;color:#e4e4e7;letter-spacing:0.096px">additional keys and values.</div>
<div class="t" style="left:770px;top:513.29px;font-size:16.3px;line-height:40px;color:#e4e4e7;letter-spacing:0.157px">Here's an example of how you might construct it:</div>
<div class="t" style="left:770px;top:561.29px;font-size:16.3px;line-height:40px;color:#e4e4e7;letter-spacing:-0.395px">```python</div>
<div class="t" style="left:770px;top:585.29px;font-size:16.3px;line-height:40px;color:#e4e4e7;letter-spacing:0.219px">from langchain_core.runnables import RunnablePassthrough</div>
<div class="t" style="left:770px;top:633.29px;font-size:16.3px;line-height:40px;color:#e4e4e7;letter-spacing:0.049px"># Create a runnable that adds keys 'b' and 'c'</div>
<div class="t" style="left:770px;top:657.29px;font-size:16.3px;line-height:40px;color:#e4e4e7;letter-spacing:0.047px">runnable = RunnablePassthrough.assign(b=2, c=3)</div>
<div class="t" style="left:770px;top:705.29px;font-size:16.3px;line-height:40px;color:#e4e4e7;letter-spacing:0.275px"># Invoke the runnable with the initial input</div>
<div class="t" style="left:770px;top:729.29px;font-size:16.3px;line-height:40px;color:#e4e4e7;letter-spacing:-0.073px">result = runnable.invoke({'a': 1})</div>
<div class="t" style="left:770px;top:777.29px;font-size:16.3px;line-height:40px;color:#e4e4e7;letter-spacing:-0.131px"># Will print {'a': 1, 'b': 2, 'c': 3}</div>
<div class="t" style="left:770px;top:801.29px;font-size:16.3px;line-height:40px;color:#e4e4e7;letter-spacing:0.388px">print(result)</div>
<div class="t" style="left:770px;top:825.29px;font-size:16.3px;line-height:40px;color:#e4e4e7;letter-spacing:-1.200px">```</div>
<div class="t" style="left:770px;top:873.29px;font-size:16.3px;line-height:40px;color:#e4e4e7;letter-spacing:0.212px">This will add 'b' and 'c' to the input dictionary, producing the desired</div>
<div class="t" style="left:770px;top:897.29px;font-size:16.3px;line-height:40px;color:#e4e4e7;letter-spacing:0.534px">output.</div>
<div class="a" style="left:754px;top:1216px;height:24px;padding:0 8px 0 9px;border:1px solid #27344a;border-radius:7px;display:flex;align-items:center;white-space:pre;font-size:12px;color:#e4e4e7"><span style="display:inline-block;width:8px;height:8px;background:#3c3f8a;border-radius:1.5px;margin-right:8px"></span><span style="-webkit-text-stroke:0.3px #e4e4e7;letter-spacing:0.12px">ANSWER_ACCURACY : </span><b>0.5</b></div>
<div class="a" style="left:754px;top:1248px;display:flex;gap:8px"><div style="display:flex;align-items:center;height:22px;border-radius:6px;white-space:pre;padding:0 7px 0 6px;background:#3a1d26;color:#f43f5e;font-size:11.2px"><svg style="position:static;margin-right:5px" width="13" height="13" viewBox="0 0 13 13" fill="none" stroke="#f43f5e" stroke-width="1.4" stroke-linecap="round"><circle cx="6.5" cy="6.5" r="5.5"/><path d="M6.5 3.5 V6.5 L8.8 8.3"/></svg>11.68s</div><div style="display:flex;align-items:center;height:22px;border-radius:6px;white-space:pre;padding:0 6px 0 6px;background:#15271b;border:1px solid #1b3521;color:#2ba84a;font-size:11.8px;letter-spacing:0.35px"><svg style="position:static;margin-right:4px" width="12" height="12" viewBox="0 0 12 12" fill="none" stroke="#2ba84a" stroke-width="1.3" stroke-linecap="round" stroke-linejoin="round"><circle cx="6" cy="6" r="5.2"/><path d="M3.6 6.2 L5.3 7.9 L8.4 4.4"/></svg>SUCCESS</div><div style="display:flex;align-items:center;height:22px;border-radius:6px;white-space:pre;padding:0 3px 0 5px;border:1px solid #27344a;color:#e4e4e7;font-size:11.6px;letter-spacing:0.1px"><svg style="position:static;margin-right:5px" width="12" height="9" viewBox="0 0 12 9" fill="none" stroke="#e4e4e7" stroke-width="1.2"><ellipse cx="6" cy="3" rx="5" ry="2.2"/><path d="M1 3 V5.8 C1 7 3.2 8 6 8 C8.8 8 11 7 11 5.8 V3"/></svg>2,403</div><div style="display:flex;align-items:center;height:22px;border-radius:6px;white-space:pre;padding:0 5px;border:1px solid #27344a;color:#e4e4e7;font-size:11.8px">$0.028</div></div>
<div class="a" style="left:1340px;top:347px;width:591px;height:940px;border:1px solid #27344a;border-radius:11px"></div>
<div class="t" style="left:1357px;top:360.34px;font-size:19px;line-height:40px;color:#ececee;-webkit-text-stroke:0.4px #ececee;letter-spacing:0.55px">rag-qa-gpt4-turbo-0506902e</div>
<div class="a" style="left:1856px;top:364px;width:58px;height:34px;border:1px solid #38383e;border-radius:7px"></div>
<svg style="left:1867px;top:375px" width="12" height="12" viewBox="0 0 12 12" fill="none" stroke="#d4d4d8" stroke-width="1.2" stroke-linejoin="round"><path d="M0.8 11 L1.2 8.6 L8.3 1.5 C8.9 0.9 9.8 0.9 10.4 1.5 C11 2.1 11 3 10.4 3.6 L3.3 10.6 Z"/><path d="M6 11 H11"/></svg>
<svg style="left:1891px;top:375px" width="13" height="12" viewBox="0 0 13 12" fill="none" stroke="#d4d4d8" stroke-width="1.2"><path d="M1 0.3 V7.5 C1 8.8 1.8 9.3 3 9.3 H8.5 M1 3.3 H8.5"/><circle cx="10.3" cy="3.3" r="1.6"/><circle cx="10.3" cy="9.3" r="1.6"/></svg>
<div class="t" style="left:1373px;top:417.29px;font-size:16.3px;line-height:40px;color:#e4e4e7;letter-spacing:0.011px">To create an output map that transforms an input map `{'a': 1}` into `{'a':</div>
<div class="t" style="left:1373px;top:441.29px;font-size:16.3px;line-height:40px;color:#e4e4e7;letter-spacing:-0.183px">1, 'b': 2, 'c': 3}` in LCEL, you can use the `RunnablePassthrough.assign()`</div>
<div class="t" style="left:1373px;top:465.29px;font-size:16.3px;line-height:40px;color:#e4e4e7;letter-spacing:0.166px">method to add additional key-value pairs to the output. Here’s how you</div>
<div class="t" style="left:1373px;top:489.29px;font-size:16.3px;line-height:40px;color:#e4e4e7;letter-spacing:0.080px">can do it:</div>
<div class="t" style="left:1373px;top:537.29px;font-size:16.3px;line-height:40px;color:#e4e4e7;letter-spacing:-0.395px">```python</div>
<div class="t" style="left:1373px;top:561.29px;font-size:16.3px;line-height:40px;color:#e4e4e7;letter-spacing:0.201px">from langchain_core.runnables import RunnablePassthrough</div>
<div class="t" style="left:1373px;top:609.29px;font-size:16.3px;line-height:40px;color:#e4e4e7;letter-spacing:0.054px"># Define the chain by assigning new values to keys 'b' and 'c'</div>
<div class="t" style="left:1373px;top:633.29px;font-size:16.3px;line-height:40px;color:#e4e4e7;letter-spacing:0.009px">chain = RunnablePassthrough.assign(b=2, c=3)</div>
<div class="t" style="left:1373px;top:681.29px;font-size:16.3px;line-height:40px;color:#e4e4e7;letter-spacing:0.051px"># Invoke the chain with the input {'a': 1}</div>
<div class="t" style="left:1373px;top:705.29px;font-size:16.3px;line-height:40px;color:#e4e4e7;letter-spacing:-0.143px">result = chain.invoke({'a': 1})</div>
<div class="t" style="left:1373px;top:753.29px;font-size:16.3px;line-height:40px;color:#e4e4e7;letter-spacing:-0.127px"># Now, result should be {'a': 1, 'b': 2, 'c': 3}</div>
<div class="t" style="left:1373px;top:777.29px;font-size:16.3px;line-height:40px;color:#e4e4e7;letter-spacing:0.446px">print(result)</div>
<div class="t" style="left:1373px;top:801.29px;font-size:16.3px;line-height:40px;color:#e4e4e7;letter-spacing:-1.200px">```</div>
<div class="t" style="left:1373px;top:849.29px;font-size:16.3px;line-height:40px;color:#e4e4e7;letter-spacing:0.075px">This code utilizes the `RunnablePassthrough.assign()` to add the static</div>
<div class="t" style="left:1373px;top:873.29px;font-size:16.3px;line-height:40px;color:#e4e4e7;letter-spacing:0.136px">values for 'b' and 'c' directly to the output. When you invoke the chain</div>
<div class="t" style="left:1373px;top:897.29px;font-size:16.3px;line-height:40px;color:#e4e4e7;letter-spacing:0.076px">with `{'a': 1}`, it passes this dictionary through and adds the specified</div>
<div class="t" style="left:1373px;top:921.29px;font-size:16.3px;line-height:40px;color:#e4e4e7;letter-spacing:-0.086px">keys 'b' and 'c'.</div>
<div class="a" style="left:1357px;top:1216px;height:24px;padding:0 8px 0 9px;border:1px solid #27344a;border-radius:7px;display:flex;align-items:center;white-space:pre;font-size:12px;color:#e4e4e7"><span style="display:inline-block;width:8px;height:8px;background:#3c3f8a;border-radius:1.5px;margin-right:8px"></span><span style="-webkit-text-stroke:0.3px #e4e4e7;letter-spacing:0.12px">ANSWER_ACCURACY : </span><b>0.5</b></div>
<div class="a" style="left:1357px;top:1248px;display:flex;gap:8px"><div style="display:flex;align-items:center;height:22px;border-radius:6px;white-space:pre;padding:0 7px 0 6px;background:#3a1d26;color:#f43f5e;font-size:11.2px"><svg style="position:static;margin-right:5px" width="13" height="13" viewBox="0 0 13 13" fill="none" stroke="#f43f5e" stroke-width="1.4" stroke-linecap="round"><circle cx="6.5" cy="6.5" r="5.5"/><path d="M6.5 3.5 V6.5 L8.8 8.3"/></svg>16.81s</div><div style="display:flex;align-items:center;height:22px;border-radius:6px;white-space:pre;padding:0 6px 0 6px;background:#15271b;border:1px solid #1b3521;color:#2ba84a;font-size:11.8px;letter-spacing:0.35px"><svg style="position:static;margin-right:4px" width="12" height="12" viewBox="0 0 12 12" fill="none" stroke="#2ba84a" stroke-width="1.3" stroke-linecap="round" stroke-linejoin="round"><circle cx="6" cy="6" r="5.2"/><path d="M3.6 6.2 L5.3 7.9 L8.4 4.4"/></svg>SUCCESS</div><div style="display:flex;align-items:center;height:22px;border-radius:6px;white-space:pre;padding:0 3px 0 5px;border:1px solid #27344a;color:#e4e4e7;font-size:11.6px;letter-spacing:0.1px"><svg style="position:static;margin-right:5px" width="12" height="9" viewBox="0 0 12 9" fill="none" stroke="#e4e4e7" stroke-width="1.2"><ellipse cx="6" cy="3" rx="5" ry="2.2"/><path d="M1 3 V5.8 C1 7 3.2 8 6 8 C8.8 8 11 7 11 5.8 V3"/></svg>61,415</div><div style="display:flex;align-items:center;height:22px;border-radius:6px;white-space:pre;padding:0 5px;border:1px solid #27344a;color:#e4e4e7;font-size:11.8px">$0.619</div></div>
<div class="a" style="left:1943px;top:347px;width:591px;height:940px;border:1px solid #27344a;border-radius:11px"></div>
<div class="t" style="left:1960px;top:360.34px;font-size:19px;line-height:40px;color:#ececee;-webkit-text-stroke:0.4px #ececee;letter-spacing:0.34px">rag-qa-gpt4-1106-vectorstore-6760450f</div>
<div class="a" style="left:2459px;top:364px;width:58px;height:34px;border:1px solid #38383e;border-radius:7px"></div>
<svg style="left:2470px;top:375px" width="12" height="12" viewBox="0 0 12 12" fill="none" stroke="#d4d4d8" stroke-width="1.2" stroke-linejoin="round"><path d="M0.8 11 L1.2 8.6 L8.3 1.5 C8.9 0.9 9.8 0.9 10.4 1.5 C11 2.1 11 3 10.4 3.6 L3.3 10.6 Z"/><path d="M6 11 H11"/></svg>
<svg style="left:2494px;top:375px" width="13" height="12" viewBox="0 0 13 12" fill="none" stroke="#d4d4d8" stroke-width="1.2"><path d="M1 0.3 V7.5 C1 8.8 1.8 9.3 3 9.3 H8.5 M1 3.3 H8.5"/><circle cx="10.3" cy="3.3" r="1.6"/><circle cx="10.3" cy="9.3" r="1.6"/></svg>
<div class="t" style="left:1976px;top:417.29px;font-size:16.3px;line-height:40px;color:#e4e4e7;letter-spacing:0.118px">To create an output map with additional key-value pairs in LCEL, you</div>
<div class="t" style="left:1976px;top:441.29px;font-size:16.3px;line-height:40px;color:#e4e4e7;letter-spacing:-0.014px">can use the `RunnablePassthrough.assign()` method and pass it as an</div>
<div class="t" style="left:1976px;top:465.29px;font-size:16.3px;line-height:40px;color:#e4e4e7;letter-spacing:-0.019px">argument to a `RunnableParallel`. Here is an example:</div>
<div class="t" style="left:1976px;top:513.29px;font-size:16.3px;line-height:40px;color:#e4e4e7;letter-spacing:-0.432px">```python</div>
<div class="t" style="left:1976px;top:537.29px;font-size:16.3px;line-height:40px;color:#e4e4e7;letter-spacing:0.216px">from langchain_core.runnables import RunnableParallel,</div>
<div class="t" style="left:1976px;top:561.29px;font-size:16.3px;line-height:40px;color:#e4e4e7;letter-spacing:0.149px">RunnablePassthrough</div>
<div class="t" style="left:1976px;top:609.29px;font-size:16.3px;line-height:40px;color:#e4e4e7;letter-spacing:0.124px">runnable = RunnableParallel(</div>
<div class="t" style="left:1976px;top:633.29px;font-size:16.3px;line-height:40px;color:#e4e4e7;letter-spacing:-0.091px">    a=RunnablePassthrough(),</div>
<div class="t" style="left:1976px;top:657.29px;font-size:16.3px;line-height:40px;color:#e4e4e7;letter-spacing:-0.269px">    b=lambda _: 2,</div>
<div class="t" style="left:1976px;top:681.29px;font-size:16.3px;line-height:40px;color:#e4e4e7;letter-spacing:-0.215px">    c=lambda _: 3,</div>
<div class="t" style="left:1976px;top:705.29px;font-size:16.3px;line-height:40px;color:#e4e4e7;letter-spacing:-0.722px">)</div>
<div class="t" style="left:1976px;top:729.29px;font-size:16.3px;line-height:40px;color:#e4e4e7;letter-spacing:-0.052px">output_map = runnable.invoke({"a": 1})</div>
<div class="t" style="left:1976px;top:753.29px;font-size:16.3px;line-height:40px;color:#e4e4e7;letter-spacing:-1.200px">```</div>
<div class="t" style="left:1976px;top:801.29px;font-size:16.3px;line-height:40px;color:#e4e4e7;letter-spacing:0.116px">This will take the input dictionary `{'a':1}` and create the desired output</div>
<div class="t" style="left:1976px;top:825.29px;font-size:16.3px;line-height:40px;color:#e4e4e7;letter-spacing:-0.307px">map `{'a':1,'b':2, 'c':3}` by adding the keys `"b"` and `"c"` with their</div>
<div class="t" style="left:1976px;top:849.29px;font-size:16.3px;line-height:40px;color:#e4e4e7;letter-spacing:0.229px">corresponding static values.</div>
<div class="a" style="left:1960px;top:1216px;height:24px;padding:0 8px 0 9px;border:1px solid #27344a;border-radius:7px;display:flex;align-items:center;white-space:pre;font-size:12px;color:#e4e4e7"><span style="display:inline-block;width:8px;height:8px;background:#3c3f8a;border-radius:1.5px;margin-right:8px"></span><span style="-webkit-text-stroke:0.3px #e4e4e7;letter-spacing:0.12px">ANSWER_ACCURACY : </span><b>0.5</b></div>
<div class="a" style="left:1960px;top:1248px;display:flex;gap:8px"><div style="display:flex;align-items:center;height:22px;border-radius:6px;white-space:pre;padding:0 7px 0 6px;background:#3a1d26;color:#f43f5e;font-size:11.2px"><svg style="position:static;margin-right:5px" width="13" height="13" viewBox="0 0 13 13" fill="none" stroke="#f43f5e" stroke-width="1.4" stroke-linecap="round"><circle cx="6.5" cy="6.5" r="5.5"/><path d="M6.5 3.5 V6.5 L8.8 8.3"/></svg>7.37s</div><div style="display:flex;align-items:center;height:22px;border-radius:6px;white-space:pre;padding:0 6px 0 6px;background:#15271b;border:1px solid #1b3521;color:#2ba84a;font-size:11.8px;letter-spacing:0.35px"><svg style="position:static;margin-right:4px" width="12" height="12" viewBox="0 0 12 12" fill="none" stroke="#2ba84a" stroke-width="1.3" stroke-linecap="round" stroke-linejoin="round"><circle cx="6" cy="6" r="5.2"/><path d="M3.6 6.2 L5.3 7.9 L8.4 4.4"/></svg>SUCCESS</div><div style="display:flex;align-items:center;height:22px;border-radius:6px;white-space:pre;padding:0 3px 0 5px;border:1px solid #27344a;color:#e4e4e7;font-size:11.6px;letter-spacing:0.1px"><svg style="position:static;margin-right:5px" width="12" height="9" viewBox="0 0 12 9" fill="none" stroke="#e4e4e7" stroke-width="1.2"><ellipse cx="6" cy="3" rx="5" ry="2.2"/><path d="M1 3 V5.8 C1 7 3.2 8 6 8 C8.8 8 11 7 11 5.8 V3"/></svg>2,380</div><div style="display:flex;align-items:center;height:22px;border-radius:6px;white-space:pre;padding:0 5px;border:1px solid #27344a;color:#e4e4e7;font-size:11.8px">$0.027</div></div></body></html>
